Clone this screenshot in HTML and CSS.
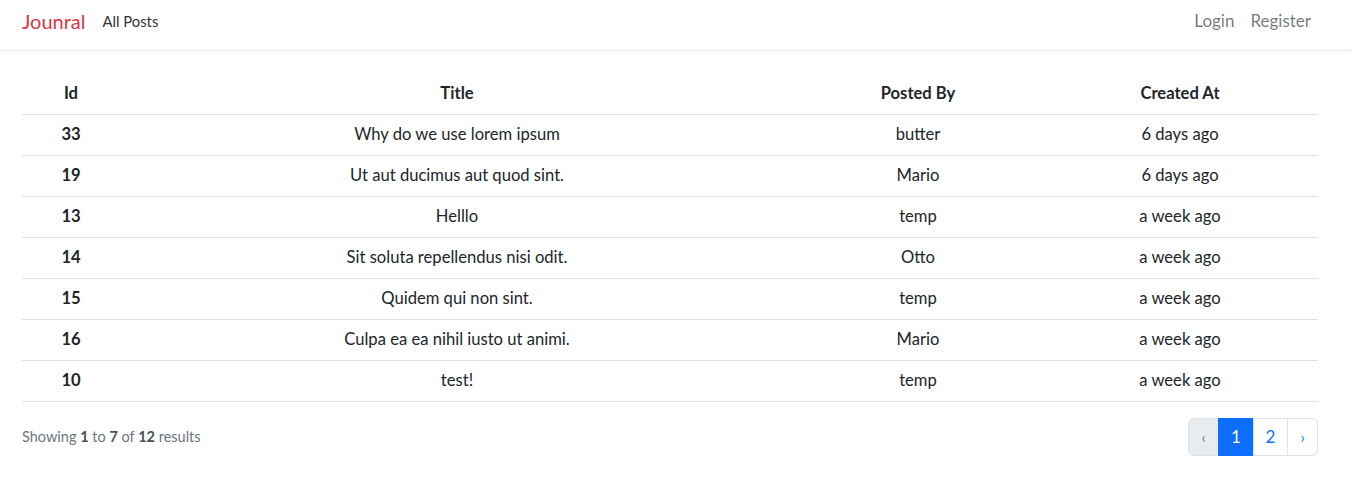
FILE: index.html
```html
<!DOCTYPE html>
<html lang="en">
<head>
<meta charset="utf-8">
<title>Jounral</title>
<link rel="stylesheet" href="styles.css">
</head>
<body>
<nav class="navbar">
  <div class="nav-left">
    <a class="brand" href="#">Jounral</a>
    <a class="nav-link active" href="#">All Posts</a>
  </div>
  <div class="nav-right">
    <a class="nav-link" href="#">Login</a>
    <a class="nav-link" href="#">Register</a>
  </div>
</nav>
<main class="main">
  <table class="posts">
    <colgroup>
      <col class="c-id"><col class="c-title"><col class="c-by"><col class="c-at">
    </colgroup>
    <thead>
      <tr><th>Id</th><th>Title</th><th>Posted By</th><th>Created At</th></tr>
    </thead>
    <tbody>
      <tr><td class="id">33</td><td>Why do we use lorem ipsum</td><td>butter</td><td>6 days ago</td></tr>
      <tr><td class="id">19</td><td>Ut aut ducimus aut quod sint.</td><td>Mario</td><td>6 days ago</td></tr>
      <tr><td class="id">13</td><td>Helllo</td><td>temp</td><td>a week ago</td></tr>
      <tr><td class="id">14</td><td>Sit soluta repellendus nisi odit.</td><td>Otto</td><td>a week ago</td></tr>
      <tr><td class="id">15</td><td>Quidem qui non sint.</td><td>temp</td><td>a week ago</td></tr>
      <tr><td class="id">16</td><td>Culpa ea ea nihil iusto ut animi.</td><td>Mario</td><td>a week ago</td></tr>
      <tr><td class="id">10</td><td>test!</td><td>temp</td><td>a week ago</td></tr>
    </tbody>
  </table>
  <div class="pager-row">
    <p class="summary">Showing <b>1</b> to <b>7</b> of <b>12</b> results</p>
    <ul class="pagination">
      <li class="page disabled"><span>&lsaquo;</span></li>
      <li class="page current"><span>1</span></li>
      <li class="page"><a href="#">2</a></li>
      <li class="page"><a href="#">&rsaquo;</a></li>
    </ul>
  </div>
</main>
</body>
</html>
```
FILE: styles.css
```css
* { box-sizing: border-box; }
html, body { margin: 0; padding: 0; }
body {
  font-family: "Lato", "Noto Sans", sans-serif;
  font-size: 16.6px;
  color: #212529;
  background: #fff;
}
a { text-decoration: none; }

.navbar {
  height: 49px;
  display: flex;
  align-items: center;
  justify-content: space-between;
  padding: 0 42px 8px 22px;
  background: #fff;
  box-shadow: 0 2px 4px rgba(0,0,0,.075);
}
.nav-left, .nav-right { display: flex; align-items: center; }
.brand {
  color: #dc3545;
  font-size: 20px;
  margin-right: 17px;
}
.nav-link {
  color: rgba(0,0,0,.55);
  font-size: 17px;
  padding: 0 0 0 16px;
}
.nav-left .nav-link.active { color: #2f3337; font-size: 14.8px; padding: 0; }

.main {
  padding: 24px 35px 0 22px;
}
.posts {
  width: 1296px;
  border-collapse: collapse;
  table-layout: fixed;
}
.c-id { width: 98px; }
.c-title { width: 674px; }
.c-by { width: 248px; }
.c-at { width: 276px; }
.posts th, .posts td {
  height: 41px;
  text-align: center;
  vertical-align: middle;
  padding: 0 8px 1px;
  border-bottom: 1px solid #dee2e6;
}
.posts th { font-weight: 700; }
.posts td.id { font-weight: 700; }

.pager-row {
  display: flex;
  justify-content: space-between;
  align-items: center;
  width: 1296px;
  margin-top: 16px;
}
.summary {
  margin: 0;
  font-size: 14.5px;
  color: #6c757d;
}
.summary b { font-weight: 700; color: #4b5257; }
.pagination {
  display: flex;
  list-style: none;
  margin: 0;
  padding: 0;
}
.page > a, .page > span {
  display: flex;
  align-items: center;
  justify-content: center;
  height: 38px;
  font-size: 17px;
  color: #0d6efd;
  background: #fff;
  border: 1px solid #dee2e6;
  margin-left: -1px;
}
.page:first-child > span { border-radius: 6px 0 0 6px; margin-left: 0; width: 31px; }
.page:last-child > a { border-radius: 0 6px 6px 0; width: 31px; font-size: 15px; }
.page.current > span { background: #0d6efd; border-color: #0d6efd; color: #fff; width: 36px; }
.page:nth-child(3) > a { width: 35px; }
.page.disabled > span { background: #e9ecef; color: #6c757d; font-size: 15px; }
```
